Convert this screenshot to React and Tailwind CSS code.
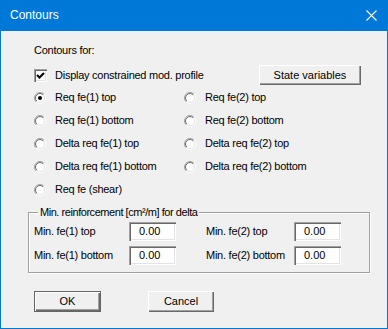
const raised =
  'bg-[#f0f0f0] shadow-[inset_1px_1px_0_#ffffff,inset_-1px_-1px_0_#696969,inset_-2px_-2px_0_#a0a0a0]';
const sunken =
  'bg-white shadow-[inset_1px_1px_0_#a0a0a0,inset_2px_2px_0_#696969,inset_-1px_-1px_0_#ffffff,inset_-2px_-2px_0_#e3e3e3]';

function Radio({ checked }) {
  return (
    <svg width="12" height="12" viewBox="0 0 12 12" className="shrink-0">
      <defs>
        <linearGradient id="ro" x1="0" y1="0" x2="1" y2="1">
          <stop offset="0.45" stopColor="#a0a0a0" />
          <stop offset="0.55" stopColor="#ffffff" />
        </linearGradient>
        <linearGradient id="ri" x1="0" y1="0" x2="1" y2="1">
          <stop offset="0.45" stopColor="#696969" />
          <stop offset="0.55" stopColor="#e3e3e3" />
        </linearGradient>
      </defs>
      <circle cx="6" cy="6" r="5.5" fill="none" stroke="url(#ro)" strokeWidth="1" />
      <circle cx="6" cy="6" r="4.5" fill="#ffffff" stroke="url(#ri)" strokeWidth="1" />
      {checked && <circle cx="6" cy="6" r="2" fill="#000" />}
    </svg>
  );
}

function Option({ label, checked }) {
  return (
    <div className="h-[23px] flex items-center">
      <Radio checked={checked} />
      <span className="ml-[9px] tracking-[-0.25px]">{label}</span>
    </div>
  );
}

function Field({ label, labelW }) {
  return (
    <div className="flex items-center h-[19px]">
      <span className={`tracking-[-0.25px] ${labelW}`}>{label}</span>
      <div className={`w-[47px] h-[19px] pl-[10px] flex items-center ${sunken}`}>0.00</div>
    </div>
  );
}

export default function App() {
  return (
    <div
      className="w-[388px] h-[329px] border border-t-0 border-[#0078d7] bg-[#f0f0f0] text-black text-[11px] leading-[13px]"
      style={{ fontFamily: '"Liberation Sans", Arial, sans-serif' }}
    >
      <div className="h-[31px] bg-[#0078d7] flex items-center justify-between pl-[9px] pr-[10px] text-white text-[12px]">
        <span>Contours</span>
        <svg width="11" height="11" viewBox="0 0 11 11">
          <path d="M0.5 0.5 L10.5 10.5 M10.5 0.5 L0.5 10.5" stroke="#fff" strokeWidth="1.1" />
        </svg>
      </div>

      <div className="pl-[27px] pt-[12px]">
        <div className="pl-[6px] h-[14px] flex items-center tracking-[-0.25px]">Contours for:</div>

        <div className="pl-[6px] mt-[8px] h-[20px] flex items-center">
          <div className={`w-[13px] h-[13px] flex items-center justify-center ${sunken}`}>
            <svg width="9" height="9" viewBox="0 0 9 9">
              <path d="M1 4 L3.5 6.5 L8 2" fill="none" stroke="#000" strokeWidth="2" />
            </svg>
          </div>
          <span className="ml-[8px] w-[204px] tracking-[-0.25px]">Display constrained mod. profile</span>
          <button className={`w-[102px] h-[20px] flex items-center justify-center ${raised}`}>
            State variables
          </button>
        </div>

        <div className="pl-[6px] mt-[1px] grid grid-cols-[150px_150px]">
          <Option label="Req fe(1) top" checked />
          <Option label="Req fe(2) top" />
          <Option label="Req fe(1) bottom" />
          <Option label="Req fe(2) bottom" />
          <Option label="Delta req fe(1) top" />
          <Option label="Delta req fe(2) top" />
          <Option label="Delta req fe(1) bottom" />
          <Option label="Delta req fe(2) bottom" />
          <Option label="Req fe (shear)" />
        </div>

        <div className="mt-[11px] w-[342px] h-[61px] border border-[#a0a0a0] shadow-[1px_1px_0_#ffffff,inset_1px_1px_0_#ffffff] pl-[5px]">
          <div className="-mt-[7px] ml-[4px] px-[2px] w-fit h-[13px] bg-[#f0f0f0] tracking-[-0.45px]">
            Min. reinforcement [cm²/m] for delta
          </div>
          <div className="mt-[3px] flex flex-col gap-[5px]">
            <div className="flex">
              <Field label="Min. fe(1) top" labelW="w-[95px]" />
              <div className="ml-[30px]">
                <Field label="Min. fe(2) top" labelW="w-[88px]" />
              </div>
            </div>
            <div className="flex">
              <Field label="Min. fe(1) bottom" labelW="w-[95px]" />
              <div className="ml-[30px]">
                <Field label="Min. fe(2) bottom" labelW="w-[88px]" />
              </div>
            </div>
          </div>
        </div>

        <div className="pl-[6px] mt-[18px] flex gap-[47px]">
          <button className={`w-[67px] h-[21px] border border-[#646464] flex items-center justify-center ${raised}`}>
            OK
          </button>
          <button className={`w-[66px] h-[21px] flex items-center justify-center ${raised}`}>
            Cancel
          </button>
        </div>
      </div>
    </div>
  );
}
